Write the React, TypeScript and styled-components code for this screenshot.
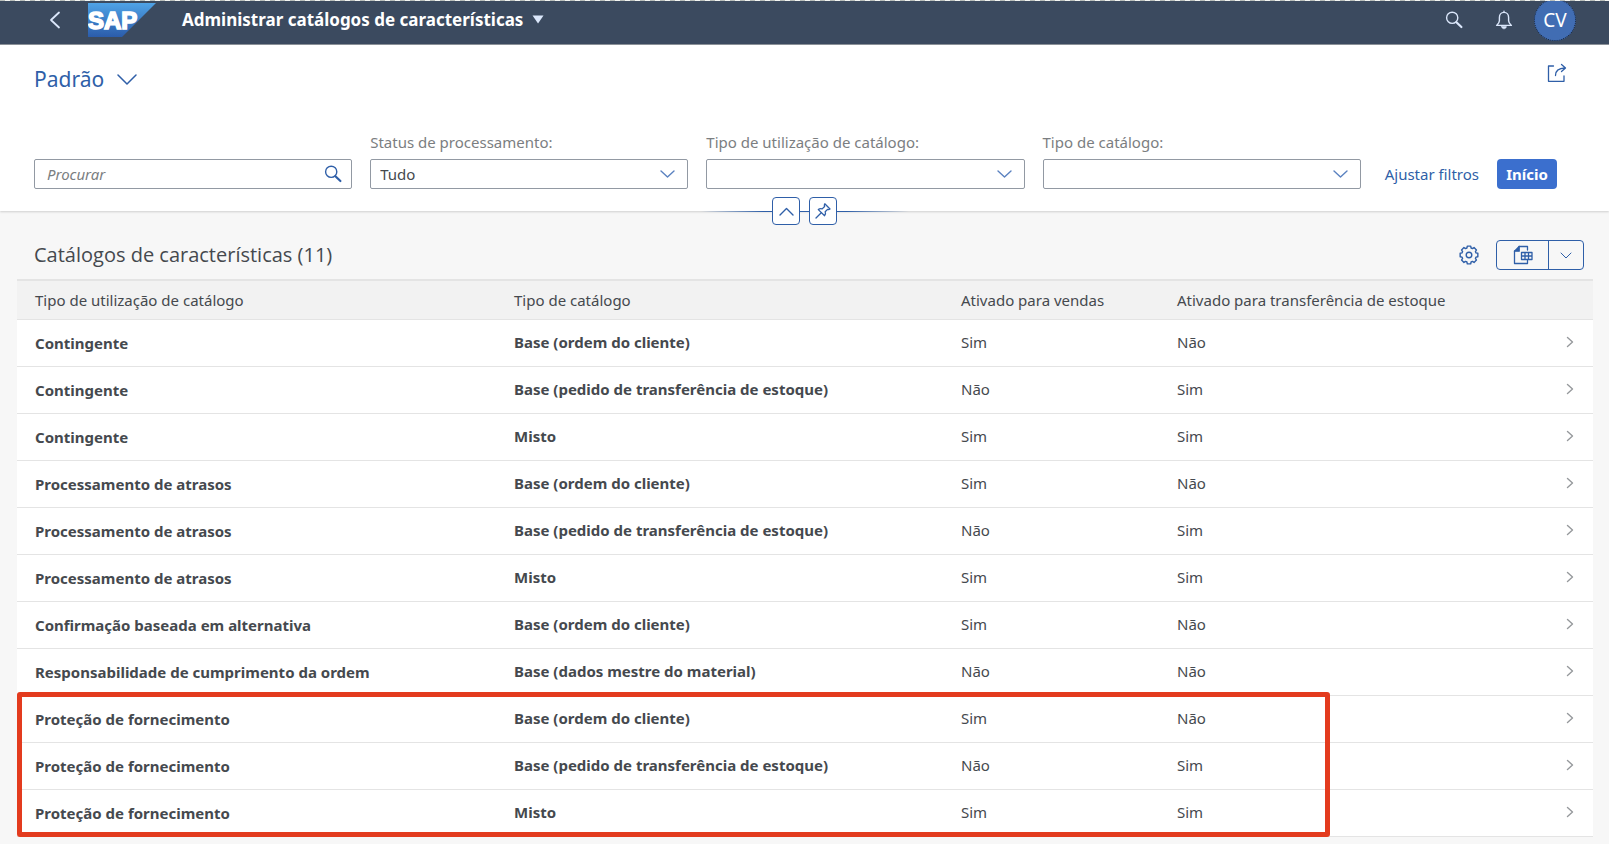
import React from 'react';
import styled, { createGlobalStyle } from 'styled-components';

const color = {
  shell: '#3b4a5f',
  link: '#2f5fa8',
  accent: '#3b6fce',
  text: '#45494e',
  label: '#7b7e81',
  page: '#f7f7f7',
  line: '#e4e4e4',
};

const GlobalStyle = createGlobalStyle`
  * { box-sizing: border-box; }
  body {
    margin: 0;
    background: ${color.page};
    color: ${color.text};
    font-family: 'Noto Sans', 'Open Sans', sans-serif;
    font-size: 15px;
    line-height: 20px;
  }
  button, input, select { font: inherit; color: inherit; margin: 0; }
  button { cursor: pointer; padding: 0; }
`;

const DashedEdge = styled.div`
  height: 1px;
  background: repeating-linear-gradient(90deg, #b9beba 0 5px, #f4f6f2 5px 10px);
`;

const ShellBar = styled.header`
  display: flex;
  align-items: center;
  height: 44px;
  padding: 0 33px 6px 45px;
  overflow: hidden;
  background: ${color.shell};
  border-bottom: 1px solid #868c94;
  color: #fff;
`;

const IconButton = styled.button`
  display: inline-flex;
  align-items: center;
  justify-content: center;
  flex: none;
  width: 20px;
  height: 20px;
  border: 0;
  background: none;
  color: ${color.link};
`;

const ShellIconButton = styled(IconButton)`
  color: #dbe7fb;
`;

const LogoLink = styled.a`
  display: flex;
  margin: 0 26px 0 23px;
`;

const AppTitle = styled.h1`
  margin: 0;
  font-size: 17px;
  line-height: 24px;
`;

const TitleButton = styled.button`
  display: inline-flex;
  align-items: center;
  gap: 9px;
  border: 0;
  background: none;
  font-weight: 700;
`;

const ShellTools = styled.div`
  display: flex;
  align-items: center;
  gap: 30px;
  margin-left: auto;
`;

const Avatar = styled.button`
  flex: none;
  width: 42px;
  height: 42px;
  margin-left: -10px;
  border: 1px dotted #14233c;
  border-radius: 50%;
  background: #416db3;
  font-size: 19px;
`;

const FilterPanel = styled.section`
  position: relative;
  padding: 18px 52px 22px 34px;
  background: #fff;
  box-shadow: 0 1px 2px #cfcfcf;
`;

const VariantRow = styled.div`
  display: flex;
  align-items: center;
  justify-content: space-between;
  height: 32px;
  margin-right: -10px;
`;

const VariantButton = styled.button`
  display: inline-flex;
  align-items: center;
  gap: 13px;
  border: 0;
  background: none;
  color: ${color.link};
  font-size: 21px;
  line-height: 30px;
`;

const ShareSlot = styled.div`
  display: flex;
  align-self: flex-start;
`;

const FilterRow = styled.form`
  display: flex;
  align-items: flex-end;
  margin-top: 37px;
`;

const Fields = styled.div`
  display: grid;
  flex: 1;
  grid-template-columns: repeat(4, minmax(0, 1fr));
  align-items: end;
  gap: 18px;
`;

const Field = styled.div`
  display: flex;
  flex-direction: column;
  gap: 7px;
`;

const FieldLabel = styled.label`
  color: ${color.label};
  white-space: nowrap;
`;

const Control = styled.div`
  position: relative;
  display: flex;
  height: 30px;
  border: 1px solid #9299a3;
  border-radius: 2px;
  background: #fff;
`;

const SearchInput = styled.input`
  flex: 1;
  min-width: 0;
  padding: 0 0 0 12px;
  border: 0;
  background: none;
  outline: 0;
  &::placeholder { color: #7b7e81; font-style: italic; opacity: 1; }
`;

const SearchButton = styled(IconButton)`
  align-self: center;
  margin-right: 8px;
`;

const Select = styled.select`
  flex: 1;
  appearance: none;
  padding: 0 40px 0 9px;
  border: 0;
  background: none;
  outline: 0;
`;

const SelectArrow = styled.span`
  position: absolute;
  top: 0;
  right: 12px;
  display: flex;
  align-items: center;
  height: 100%;
  color: #5b82c0;
  pointer-events: none;
`;

const FilterActions = styled.div`
  display: flex;
  align-items: center;
  gap: 18px;
  margin-left: 24px;
`;

const TextButton = styled.button`
  border: 0;
  background: none;
  color: ${color.link};
  white-space: nowrap;
`;

const GoButton = styled.button`
  width: 60px;
  height: 30px;
  border: 0;
  border-radius: 4px;
  background: ${color.accent};
  color: #fff;
  font-weight: 700;
`;

const PanelHandle = styled.div`
  position: absolute;
  right: 0;
  bottom: -14px;
  left: 0;
  display: flex;
  justify-content: center;
  gap: 9px;
  width: 208px;
  margin: 0 auto;
  background: linear-gradient(90deg, transparent, ${color.link} 30%, ${color.link} 70%, transparent)
    center / 100% 1px no-repeat;
`;

const HandleButton = styled(IconButton)`
  width: 28px;
  height: 28px;
  border: 1px solid ${color.link};
  border-radius: 4px;
  background: #fff;
`;

const TableToolbar = styled.div`
  display: flex;
  align-items: center;
  justify-content: space-between;
  height: 68px;
  padding: 20px 25px 0 34px;
`;

const TableTitle = styled.h2`
  margin: 0;
  font-family: 'Open Sans', 'Noto Sans', sans-serif;
  font-size: 20px;
  font-weight: 400;
  line-height: 30px;
`;

const ToolbarActions = styled.div`
  display: flex;
  align-items: center;
  gap: 17px;
`;

const SplitButton = styled.div`
  display: flex;
  height: 30px;
  border: 1px solid ${color.link};
  border-radius: 4px;
`;

const ExportButton = styled(IconButton)`
  width: 51px;
  height: 28px;
`;

const ExportMenuButton = styled(IconButton)`
  width: 35px;
  height: 28px;
  border-left: 1px solid ${color.link};
`;

const TableArea = styled.div`
  position: relative;
  margin: 0 16px 0 17px;
`;

const Table = styled.table`
  width: 100%;
  table-layout: fixed;
  border-collapse: separate;
  border-spacing: 0;
  background: #fff;
  border-top: 2px solid ${color.line};
`;

const Column = styled.col<{ $width?: number }>`
  width: ${(p) => (p.$width ? `${p.$width}px` : 'auto')};
`;

const HeadCell = styled.th`
  height: 39px;
  padding: 0 18px;
  border-bottom: 1px solid ${color.line};
  background: #f2f2f2;
  font-weight: 400;
  text-align: left;
  white-space: nowrap;
`;

const Cell = styled.td<{ $strong?: boolean }>`
  height: 47px;
  padding: 0 18px 2px;
  border-bottom: 1px solid ${color.line};
  font-weight: ${(p) => (p.$strong ? 700 : 400)};
`;

const KeyCell = styled(Cell)`
  padding-bottom: 0;
`;

const ArrowCell = styled(Cell)`
  padding: 0 19px 2px 0;
  color: #96999c;
  text-align: right;
`;

const RowArrow = styled.svg`
  display: block;
  margin-left: auto;
`;

const Highlight = styled.div`
  position: absolute;
  right: 263px;
  bottom: 0;
  left: 0;
  height: 145px;
  border: 5px solid #e33b1e;
  border-radius: 3px;
  pointer-events: none;
`;

const stroke = {
  fill: 'none',
  stroke: 'currentColor',
  strokeLinecap: 'round' as const,
  strokeLinejoin: 'round' as const,
};

const Chevron = ({ width = 14, height = 8, weight = 1.4 }) => (
  <svg width={width} height={height} viewBox={`0 0 ${width} ${height}`} {...stroke} strokeWidth={weight} aria-hidden>
    <path d={`M1 1 L${width / 2} ${height - 1} L${width - 1} 1`} />
  </svg>
);

const SearchIcon = () => (
  <svg width="18" height="18" viewBox="0 0 18 18" {...stroke} strokeWidth="1.4" aria-hidden>
    <circle cx="7.2" cy="6.8" r="5.6" />
    <path d="M11.4 11.2L16.4 16" strokeWidth="2.2" />
  </svg>
);

const BellIcon = () => (
  <svg width="18" height="20" viewBox="0 0 18 20" {...stroke} strokeWidth="1.4" aria-hidden>
    <path d="M9 1.2v1.2M9 2.4c-3 0-4.6 2.2-4.6 5v3.4c0 1.6-.8 2.8-2.8 4.6h14.8c-2-1.8-2.8-3-2.8-4.6V7.4c0-2.8-1.6-5-4.6-5z" />
    <path d="M6.6 16.6h4.8c-.2 1.4-1.2 2.2-2.4 2.2s-2.2-.8-2.4-2.2z" fill="currentColor" strokeWidth="0.6" />
  </svg>
);

const ShareIcon = () => (
  <svg width="20" height="20" viewBox="0 0 20 20" {...stroke} strokeWidth="1.3" aria-hidden>
    <path d="M6.5 3H1.500v15.300h15.500V13" />
    <path d="M8.500 12.500c0-4.500 3-7.300 9.500-7.500M14.500 1.500l4 3.500-4 3.500" />
  </svg>
);

const PinIcon = () => (
  <svg width="18" height="18" viewBox="0 0 18 18" {...stroke} strokeWidth="1.3" aria-hidden>
    <path d="M10.8 1.8l5.2 5.2c-.9.7-1.7.7-2.5.4l-2.300 2.400c.6 1.500.3 2.800-.6 3.900L4.300 7.600c1.200-1 2.500-1.200 3.900-.7l2.400-2.400c-.4-.9-.4-1.800.2-2.700z" />
    <path d="M7.300 10.700L2 16" />
  </svg>
);

const gearPath = (() => {
  const points: string[] = [];
  const teeth = 8;
  for (let i = 0; i < teeth; i++) {
    const mid = (i * 2 * Math.PI) / teeth;
    [[-0.29, 7.3], [-0.19, 9], [0.19, 9], [0.29, 7.3]].forEach(([offset, radius]) => {
      points.push(`${(10 + radius * Math.sin(mid + offset)).toFixed(2)} ${(10 - radius * Math.cos(mid + offset)).toFixed(2)}`);
    });
  }
  return `M${points.join('L')}Z`;
})();

const GearIcon = () => (
  <svg width="20" height="20" viewBox="0 0 20 20" {...stroke} strokeWidth="1.4" aria-hidden>
    <path d={gearPath} />
    <circle cx="10" cy="10" r="2.8" />
  </svg>
);

const ExportIcon = () => (
  <svg width="20" height="20" viewBox="0 0 20 20" {...stroke} strokeWidth="1.3" aria-hidden>
    <path d="M6 1.500h8.500V5M14.500 15.500v3H1.500V6" />
    <path d="M1.500 6.200L6.200 1.500v4.700z" fill="currentColor" />
    <path d="M8.500 7.500h10.500v7H8.500zM8.500 11h10.500M12 7.500v7M15.500 7.500v7" />
  </svg>
);

const SapLogo = () => (
  <svg width="68" height="34" viewBox="0 0 68 34" role="img" aria-label="SAP">
    <defs>
      <linearGradient id="sap" x1="0" y1="0" x2="0" y2="1">
        <stop offset="0" stopColor="#4fa3e6" />
        <stop offset="1" stopColor="#2b5cab" />
      </linearGradient>
    </defs>
    <path d="M0 0H68L34 34H0z" fill="url(#sap)" />
    <text x="0" y="26" fill="#fff" stroke="#fff" strokeWidth="1.600" fontFamily="Liberation Sans" fontWeight="700" fontSize="24">
      SAP
    </text>
  </svg>
);

const order = 'Base (ordem do cliente)';
const transfer = 'Base (pedido de transferência de estoque)';
const mixed = 'Misto';

const rows: [string, string, string, string][] = [
  ['Contingente', order, 'Sim', 'Não'],
  ['Contingente', transfer, 'Não', 'Sim'],
  ['Contingente', mixed, 'Sim', 'Sim'],
  ['Processamento de atrasos', order, 'Sim', 'Não'],
  ['Processamento de atrasos', transfer, 'Não', 'Sim'],
  ['Processamento de atrasos', mixed, 'Sim', 'Sim'],
  ['Confirmação baseada em alternativa', order, 'Sim', 'Não'],
  ['Responsabilidade de cumprimento da ordem', 'Base (dados mestre do material)', 'Não', 'Não'],
  ['Proteção de fornecimento', order, 'Sim', 'Não'],
  ['Proteção de fornecimento', transfer, 'Não', 'Sim'],
  ['Proteção de fornecimento', mixed, 'Sim', 'Sim'],
];

const SelectField = ({ id, label, value }: { id: string; label: string; value: string }) => (
  <Field>
    <FieldLabel htmlFor={id}>{label}</FieldLabel>
    <Control>
      <Select id={id} defaultValue={value}>
        <option value={value}>{value}</option>
      </Select>
      <SelectArrow>
        <Chevron width={15} height={8} />
      </SelectArrow>
    </Control>
  </Field>
);

export default function App() {
  return (
    <>
      <GlobalStyle />
      <DashedEdge />
      <ShellBar>
        <ShellIconButton aria-label="Voltar">
          <svg width="12" height="18" viewBox="0 0 12 18" {...stroke} strokeWidth="1.8" aria-hidden>
            <path d="M10 1.5L2 9l8 7.5" />
          </svg>
        </ShellIconButton>
        <LogoLink href="#">
          <SapLogo />
        </LogoLink>
        <AppTitle>
          <TitleButton>
            Administrar catálogos de características
            <svg width="12" height="9" viewBox="0 0 12 9" aria-hidden>
              <path d="M0.500 0.500H11.500L6 8.500z" fill="#dbe7fb" />
            </svg>
          </TitleButton>
        </AppTitle>
        <ShellTools>
          <ShellIconButton aria-label="Procurar">
            <SearchIcon />
          </ShellIconButton>
          <ShellIconButton aria-label="Notificações">
            <BellIcon />
          </ShellIconButton>
          <Avatar>CV</Avatar>
        </ShellTools>
      </ShellBar>

      <main>
        <FilterPanel>
          <VariantRow>
            <VariantButton>
              Padrão
              <Chevron width={20} height={11} weight={1.5} />
            </VariantButton>
            <ShareSlot>
              <IconButton aria-label="Compartilhar">
                <ShareIcon />
              </IconButton>
            </ShareSlot>
          </VariantRow>
          <FilterRow onSubmit={(e) => e.preventDefault()}>
            <Fields>
              <Control>
                <SearchInput type="text" placeholder="Procurar" aria-label="Procurar" />
                <SearchButton type="submit" aria-label="Procurar">
                  <SearchIcon />
                </SearchButton>
              </Control>
              <SelectField id="status" label="Status de processamento:" value="Tudo" />
              <SelectField id="usage" label="Tipo de utilização de catálogo:" value="" />
              <SelectField id="type" label="Tipo de catálogo:" value="" />
            </Fields>
            <FilterActions>
              <TextButton type="button">Ajustar filtros</TextButton>
              <GoButton type="submit">Início</GoButton>
            </FilterActions>
          </FilterRow>
          <PanelHandle>
            <HandleButton aria-label="Recolher cabeçalho">
              <svg width="15" height="9" viewBox="0 0 15 9" {...stroke} strokeWidth="1.4" aria-hidden>
                <path d="M1 8L7.500 1.500L14 8" />
              </svg>
            </HandleButton>
            <HandleButton aria-label="Fixar cabeçalho">
              <PinIcon />
            </HandleButton>
          </PanelHandle>
        </FilterPanel>

        <TableToolbar>
          <TableTitle>Catálogos de características (11)</TableTitle>
          <ToolbarActions>
            <IconButton aria-label="Configurações">
              <GearIcon />
            </IconButton>
            <SplitButton>
              <ExportButton aria-label="Exportar para planilha">
                <ExportIcon />
              </ExportButton>
              <ExportMenuButton aria-label="Opções de exportação">
                <Chevron width={12} height={7} weight={1} />
              </ExportMenuButton>
            </SplitButton>
          </ToolbarActions>
        </TableToolbar>

        <TableArea>
          <Table>
            <colgroup>
              <Column $width={479} />
              <Column $width={447} />
              <Column $width={216} />
              <Column />
              <Column $width={60} />
            </colgroup>
            <thead>
              <tr>
                <HeadCell>Tipo de utilização de catálogo</HeadCell>
                <HeadCell>Tipo de catálogo</HeadCell>
                <HeadCell>Ativado para vendas</HeadCell>
                <HeadCell>Ativado para transferência de estoque</HeadCell>
                <HeadCell />
              </tr>
            </thead>
            <tbody>
              {rows.map(([usage, type, sales, stock], i) => (
                <tr key={i}>
                  <KeyCell $strong>{usage}</KeyCell>
                  <Cell $strong>{type}</Cell>
                  <Cell>{sales}</Cell>
                  <Cell>{stock}</Cell>
                  <ArrowCell>
                    <RowArrow width="8" height="12" viewBox="0 0 8 12" {...stroke} strokeWidth="1.4" aria-hidden>
                      <path d="M1.500 1.500L6.500 6L1.500 10.500" />
                    </RowArrow>
                  </ArrowCell>
                </tr>
              ))}
            </tbody>
          </Table>
          <Highlight />
        </TableArea>
      </main>
    </>
  );
}
